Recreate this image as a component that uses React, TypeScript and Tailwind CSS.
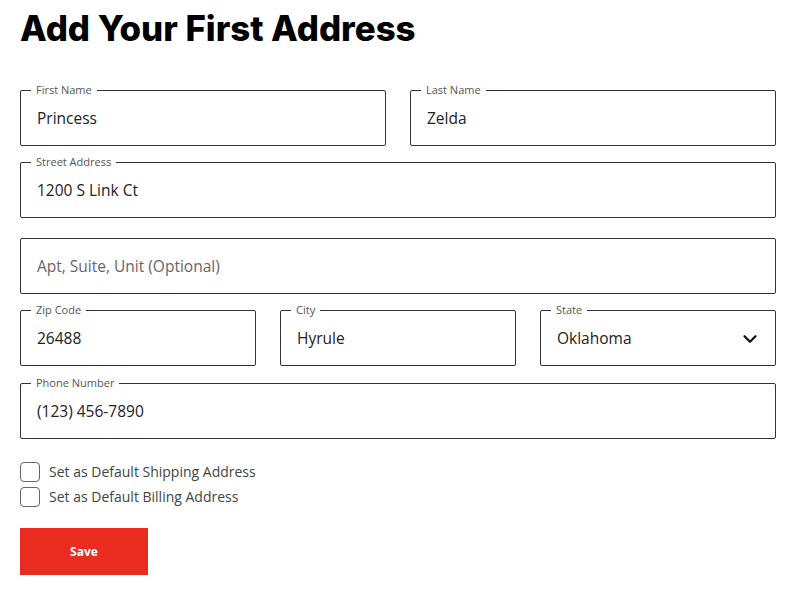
import { ChevronDown } from "lucide-react"

type FieldProps = {
  label?: string
  value?: string
  placeholder?: string
  select?: boolean
  className?: string
}

function Field({ label, value, placeholder, select, className = "" }: FieldProps) {
  return (
    <div className={`relative h-[56px] rounded-[2px] border border-[#333] ${className}`}>
      {label && (
        <span className="absolute -top-[9px] left-[10px] bg-white px-[5px] text-[11px] leading-[16px] text-[#555]">
          {label}
        </span>
      )}
      <div className="flex h-full items-center justify-between pl-[16px] pr-[14px] pt-[1px]">
        {value ? (
          <span className="text-[15.5px] text-[#222]">{value}</span>
        ) : (
          <span className="text-[15.5px] text-[#666]">{placeholder}</span>
        )}
        {select && <ChevronDown className="h-[22px] w-[22px] text-[#111]" strokeWidth={2.5} />}
      </div>
    </div>
  )
}

function Check({ label }: { label: string }) {
  return (
    <label className="flex items-center gap-[9px]">
      <span className="h-[20px] w-[20px] rounded-[4px] border border-[#666] bg-white" />
      <span className="text-[14px] leading-[20px] text-[#444]">{label}</span>
    </label>
  )
}

export default function App() {
  return (
    <div className="min-h-screen bg-white px-[20px] pt-[6px]" style={{ fontFamily: '"Open Sans", sans-serif' }}>
      <h1
        className="text-[34.8px] font-extrabold leading-[44px] text-black"
        style={{ fontFamily: 'Inter, sans-serif' }}
      >
        Add Your First Address
      </h1>

      <div className="mt-[40px] flex w-[756px] flex-col">
        {/* Name */}
        <div className="grid grid-cols-2 gap-[24px]">
          <Field label="First Name" value="Princess" />
          <Field label="Last Name" value="Zelda" />
        </div>

        <Field className="mt-[16px]" label="Street Address" value="1200 S Link Ct" />
        <Field className="mt-[20px]" placeholder="Apt, Suite, Unit (Optional)" />

        <div className="mt-[16px] grid grid-cols-3 gap-[24px]">
          <Field label="Zip Code" value="26488" />
          <Field label="City" value="Hyrule" />
          <Field label="State" value="Oklahoma" select />
        </div>

        <Field className="mt-[17px]" label="Phone Number" value="(123) 456-7890" />

        <div className="mt-[23px] flex flex-col gap-[5px]">
          <Check label="Set as Default Shipping Address" />
          <Check label="Set as Default Billing Address" />
        </div>

        <button className="mt-[21px] h-[47px] w-[128px] bg-[#ea2b1f] text-[12px] font-bold text-white">
          Save
        </button>
      </div>
    </div>
  )
}
